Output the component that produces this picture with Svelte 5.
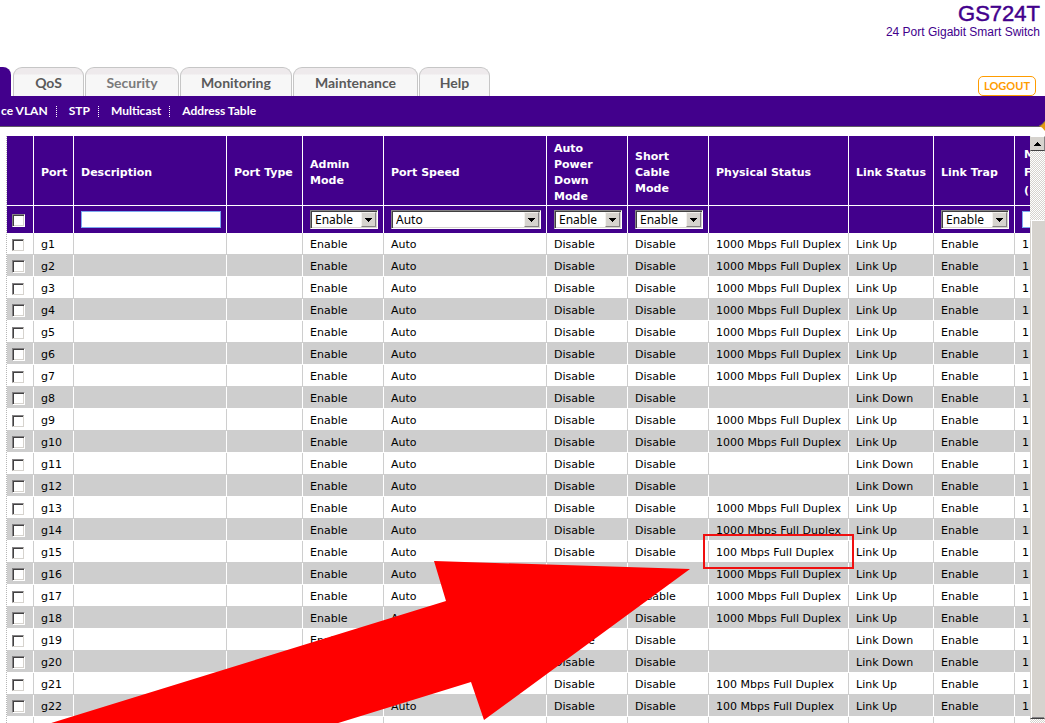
<script>
  const tabs = ['QoS', 'Security', 'Monitoring', 'Maintenance', 'Help'];
  const links = ['ce VLAN', 'STP', 'Multicast', 'Address Table'];

  const statuses = {
    8: '', 11: '', 12: '', 19: '', 20: '',
    15: '100 Mbps Full Duplex',
    21: '100 Mbps Full Duplex',
    22: '100 Mbps Full Duplex'
  };

  const ports = Array.from({ length: 23 }, (_, i) => {
    const n = i + 1;
    const physical = statuses[n] ?? '1000 Mbps Full Duplex';
    return { name: `g${n}`, physical, link: physical ? 'Link Up' : 'Link Down' };
  });
</script>

{#snippet picker(label, value)}
  <span class="picker">
    <select aria-label={label}>
      <option>{value}</option>
    </select>
    <span class="drop" aria-hidden="true">
      <svg width="7" height="4" viewBox="0 0 7 4" shape-rendering="crispEdges">
        <path d="M0 0H7V1H6V2H5V3H4V4H3V3H2V2H1V1H0Z" />
      </svg>
    </span>
  </span>
{/snippet}

<div class="page">
  <header>
    <div class="brand">
      <h1>GS724T</h1>
      <p>24 Port Gigabit Smart Switch</p>
    </div>
    <div class="top">
      <nav class="tabs">
        <span class="current"></span>
        {#each tabs as tab}
          <a href="#{tab}" class:dim={tab === 'Security'}>{tab}</a>
        {/each}
      </nav>
      <button class="logout">LOGOUT</button>
    </div>
  </header>

  <nav class="sub">
    {#each links as link}
      <a href="#{link}">{link}</a>
    {/each}
    <svg class="star" width="6" height="10" viewBox="0 0 6 10">
      <path d="M0 5L3 3.500L6 0V10L3 6.500Z" fill="#e59a10" />
      <path d="M0 5L3 3.500L6 0" fill="none" stroke="#6b6350" />
    </svg>
  </nav>

  <main>
    <div class="view">
      <table>
        <colgroup>
          <col class="check" /><col class="port" /><col class="desc" /><col class="type" />
          <col class="mode" /><col class="speed" /><col class="mode" /><col class="mode" />
          <col class="phys" /><col class="link" /><col class="mode" /><col class="frame" />
        </colgroup>
        <thead>
          <tr class="titles">
            <th></th>
            <th>Port</th>
            <th>Description</th>
            <th>Port Type</th>
            <th>Admin<br />Mode</th>
            <th>Port Speed</th>
            <th>Auto<br />Power<br />Down<br />Mode</th>
            <th>Short<br />Cable<br />Mode</th>
            <th>Physical Status</th>
            <th>Link Status</th>
            <th>Link Trap</th>
            <th class="tall">M<br />F<br />(</th>
          </tr>
          <tr class="filters">
            <td class="tick"><input type="checkbox" aria-label="All ports" /></td>
            <td></td>
            <td><input type="text" aria-label="Description" /></td>
            <td></td>
            <td>{@render picker('Admin Mode', 'Enable')}</td>
            <td>{@render picker('Port Speed', 'Auto')}</td>
            <td>{@render picker('Auto Power Down Mode', 'Enable')}</td>
            <td>{@render picker('Short Cable Mode', 'Enable')}</td>
            <td></td>
            <td></td>
            <td>{@render picker('Link Trap', 'Enable')}</td>
            <td><input type="text" aria-label="Frame" /></td>
          </tr>
        </thead>
        <tbody>
          {#each ports as port}
            <tr>
              <td class="tick"><input type="checkbox" aria-label={port.name} /></td>
              <td>{port.name}</td>
              <td></td>
              <td></td>
              <td>Enable</td>
              <td>Auto</td>
              <td>Disable</td>
              <td>Disable</td>
              <td>{port.physical}</td>
              <td>{port.link}</td>
              <td>Enable</td>
              <td>1</td>
            </tr>
          {/each}
        </tbody>
      </table>
    </div>
    <div class="scrollbar">
      <button class="up" aria-label="Scroll up">
        <svg width="7" height="4" viewBox="0 0 7 4" shape-rendering="crispEdges">
          <path d="M0 4H7V3H6V2H5V1H4V0H3V1H2V2H1V3H0Z" />
        </svg>
      </button>
      <div class="thumb"></div>
    </div>
  </main>

  <svg class="arrow" width="700" height="724" viewBox="0 0 700 724" aria-hidden="true">
    <polygon points="434,561 690,569 484,720 471,682 335,724 48,724 446,601" fill="#f00" />
  </svg>
  <div class="callout"></div>
</div>

<style>
  :global(body) {
    margin: 0;
    background: #fff;
  }

  .page {
    position: relative;
    display: flex;
    flex-direction: column;
    height: 100vh;
    overflow: hidden;
    font: 11px/16px "DejaVu Sans", Verdana, sans-serif;
    color: #000;
  }

  .page * {
    box-sizing: border-box;
  }

  .brand {
    height: 67px;
    padding: 3px 5px 0 0;
    text-align: right;
    color: #42008c;
    font-family: "Liberation Sans", Arial, sans-serif;
  }

  h1 {
    margin: 0;
    font-size: 22px;
    line-height: 22px;
    font-weight: 400;
    -webkit-text-stroke: thin #42008c;
  }

  p {
    margin: 0;
    font-size: 12px;
    line-height: 14px;
  }

  .top {
    display: flex;
    justify-content: space-between;
    align-items: flex-end;
    padding-right: 9px;
  }

  .tabs {
    display: grid;
    grid-template-columns: 12px 71px 94px 112px 125px 71px;
    column-gap: 1px;
    height: 29px;
    font: bold 14px/30px Lato, sans-serif;
  }

  .tabs a {
    border: 1px solid #c6c6c6;
    border-bottom: 0;
    border-radius: 9px 9px 0 0;
    background: linear-gradient(#eeeaec 0 6px, #f7f7f7 7px);
    color: #5a5a5a;
    text-align: center;
    text-decoration: none;
  }

  .tabs a.dim {
    color: #7b7b7b;
  }

  .current {
    margin-right: 1px;
    background: #42008c;
    border-radius: 0 8px 0 0;
  }

  .logout {
    width: 58px;
    height: 20px;
    padding: 0;
    border: 1px solid #ff9c00;
    border-radius: 5px;
    background: #fff;
    color: #ff9c00;
    font: bold 11px/18px Lato, sans-serif;
  }

  .sub {
    position: relative;
    display: flex;
    align-items: center;
    height: 31px;
    background: #42008c;
    border-bottom: 1px solid #5f5b66;
    font: bold 12px/16px Lato, sans-serif;
  }

  .sub a {
    padding: 0 9px 0 12px;
    color: #fff;
    text-decoration: none;
    background: repeating-linear-gradient(#fff 0 1px, #42008c 1px 2px) right center / 1px 11px no-repeat;
  }

  .sub a:first-child {
    padding-left: 1px;
  }

  .sub a:last-of-type {
    background: none;
  }

  .star {
    position: absolute;
    right: 0;
    bottom: -5px;
  }

  main {
    display: flex;
    flex: 1;
    min-height: 0;
    margin: 9px 0 0 6px;
  }

  .view {
    flex: 1;
    min-width: 0;
    overflow: hidden;
    border-left: 1px dotted #b5b5b5;
  }

  table {
    width: 100%;
    min-width: 1088px;
    table-layout: fixed;
    border-collapse: separate;
    border-spacing: 0;
  }

  .check { width: 27px; }
  .port { width: 40px; }
  .desc { width: 153px; }
  .type { width: 76px; }
  .mode { width: 81px; }
  .speed { width: 163px; }
  .phys { width: 140px; }
  .link { width: 85px; }
  .frame { width: 80px; }

  th,
  td {
    padding: 0 5px 0 7px;
    text-align: left;
    vertical-align: middle;
    white-space: nowrap;
    border-right: 1px solid #fff;
  }

  th {
    height: 70px;
    padding-top: 5px;
    padding-right: 0;
    background: #42008c;
    border-bottom: 1px solid #fff;
    color: #fff;
    font-weight: bold;
  }

  th.tall {
    padding-left: 9px;
    line-height: 18px;
  }

  .filters td {
    height: 27px;
    background: #42008c;
  }

  tbody td {
    height: 22px;
    padding-top: 2px;
    border-right-color: #cecece;
    border-bottom: 1px solid #cecece;
  }

  tbody tr:nth-child(even) td {
    background: #cecece;
    border-color: #fff;
  }

  td.tick {
    padding: 2px 0 0 5px;
  }

  input,
  select {
    appearance: none;
    display: block;
    margin: 0;
    border-radius: 0;
    background: #fff;
  }

  input[type="checkbox"] {
    width: 13px;
    height: 13px;
    border: 1px solid;
    border-color: #848284 #fff #fff #848284;
    box-shadow: inset 1px 1px #424142, inset -1px -1px #d6d3ce;
  }

  tbody tr:nth-child(odd) input {
    width: 12px;
    height: 12px;
    border-color: #848284 #d6d3ce #d6d3ce #848284;
    box-shadow: inset 1px 1px #424142;
  }

  input[type="text"] {
    width: 100%;
    height: 17px;
    border: 1px solid #7baaf0;
  }

  .picker {
    position: relative;
    display: block;
  }

  select {
    width: 100%;
    height: 19px;
    padding: 0 16px 0 4px;
    border: 1px solid;
    border-color: #848284 #fff #fff #848284;
    box-shadow: inset 1px 1px #424142, inset -1px -1px #d6d3ce;
    color: #000;
    font: 12px/16px "Noto Sans", Tahoma, sans-serif;
  }

  .drop {
    position: absolute;
    top: 2px;
    right: 2px;
    bottom: 2px;
    display: grid;
    place-items: center;
    width: 15px;
    pointer-events: none;
  }

  .drop,
  .up,
  .thumb {
    background: #d6d3ce;
    border: 1px solid;
    border-color: #f4f2ee #848284 #848284 #f4f2ee;
  }

  .scrollbar {
    width: 15px;
    background: repeating-conic-gradient(#d6d3ce 0 25%, #fff 0 50%) 0 0 / 2px 2px;
  }

  .up {
    display: grid;
    place-items: center;
    width: 100%;
    height: 15px;
    padding: 0;
    border-color: #fff #848284 #424142 #d6d3ce;
  }

  .thumb {
    height: calc(100% - 88px);
    margin-top: 69px;
    border-color: #fff #d6d3ce #424142 #d6d3ce;
    box-shadow: inset 1px 0 #fff, inset 0 -1px #848284;
  }

  .arrow {
    position: absolute;
    top: 0;
    left: 0;
    pointer-events: none;
  }

  .callout {
    position: absolute;
    top: 534px;
    left: 703px;
    width: 151px;
    height: 35px;
    border: 2px solid #f01010;
    pointer-events: none;
  }
</style>
